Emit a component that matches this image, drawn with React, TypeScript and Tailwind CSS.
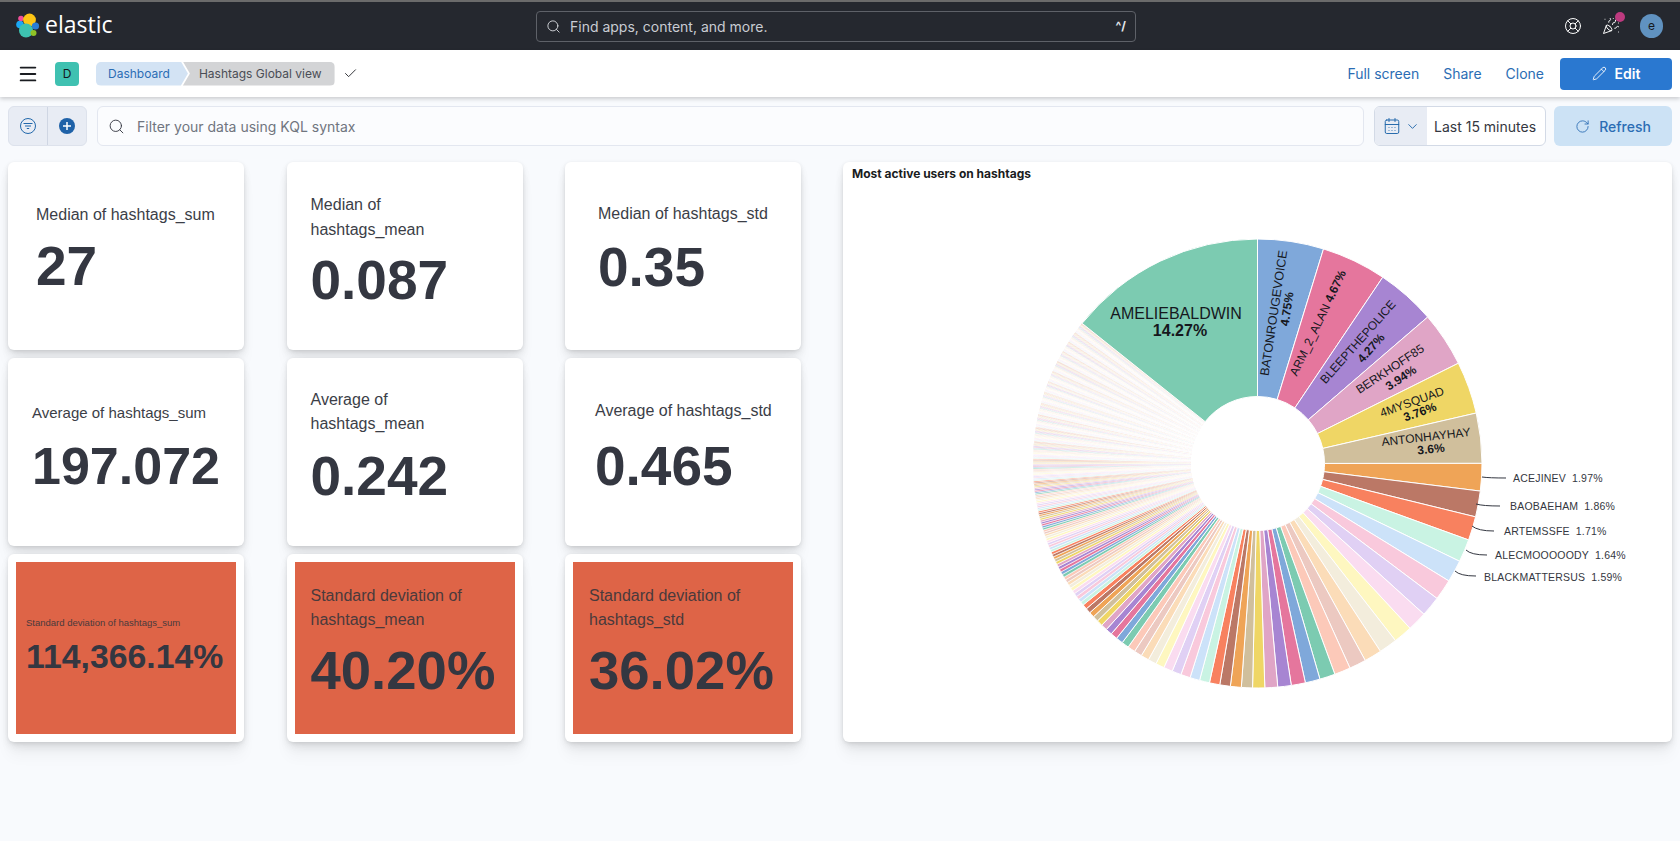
import { CalendarDays, Check, ChevronDown, LifeBuoy, Menu, PartyPopper, Pencil, RotateCw, Search } from "lucide-react";

const panelShadow =
  "shadow-[0_1px_4px_-1px_rgba(0,0,0,0.12),0_3px_8px_-1px_rgba(0,0,0,0.08),0_6px_12px_-1px_rgba(0,0,0,0.06),0_15px_15px_-1px_rgba(0,0,0,0.04)]";

const metrics = [
  { label: "Median of hashtags_sum", value: "27", pad: "pl-[28px]", labelSize: "text-[16px] leading-[1.6] pb-[4px]", valueSize: "text-[55px]", alert: false, shift: "-mt-[9px]" },
  { label: "Median of hashtags_mean", value: "0.087", pad: "pl-[24px] pr-[30px]", labelSize: "text-[16px] leading-[1.6] pb-[3px]", valueSize: "text-[55px]", alert: false, shift: "-mt-[6px]" },
  { label: "Median of hashtags_std", value: "0.35", pad: "pl-[33px]", labelSize: "text-[16px] leading-[1.6] pb-[6px]", valueSize: "text-[55px]", alert: false, shift: "-mt-[9px]" },
  { label: "Average of hashtags_sum", value: "197.072", pad: "pl-[24px]", labelSize: "text-[15px] leading-[1.6] pb-[9px]", valueSize: "text-[52px]", alert: false, shift: "-mt-[4px]" },
  { label: "Average of hashtags_mean", value: "0.242", pad: "pl-[24px] pr-[30px]", labelSize: "text-[16px] leading-[1.5] pb-[6px]", valueSize: "text-[55px]", alert: false, shift: "-mt-[5px]" },
  { label: "Average of hashtags_std", value: "0.465", pad: "pl-[30px]", labelSize: "text-[16px] leading-[1.6] pb-[8px]", valueSize: "text-[55px]", alert: false, shift: "-mt-[5px]" },
  { label: "Standard deviation of hashtags_sum", value: "114,366.14%", pad: "pl-[10px]", labelSize: "text-[9.5px] leading-[1.6] pb-[5px]", valueSize: "text-[33.8px]", alert: true, shift: "-mt-[4px]" },
  { label: "Standard deviation of hashtags_mean", value: "40.20%", pad: "pl-[16px] pr-[10px]", labelSize: "text-[16px] leading-[1.5] pb-[5px]", valueSize: "text-[54.5px]", alert: true, shift: "-mt-[6px]" },
  { label: "Standard deviation of hashtags_std", value: "36.02%", pad: "pl-[16px] pr-[10px]", labelSize: "text-[16px] leading-[1.5] pb-[5px]", valueSize: "text-[54.5px]", alert: true, shift: "-mt-[6px]" },
];

const palette = [
  "#7ccbb1", "#7fa8da", "#e5769d", "#a785d2", "#e0a5c6", "#efd665", "#d0bf9c", "#efa457", "#bb7866", "#f8815f",
  "#c9f3e3", "#cce2f9", "#f9c9dc", "#e0d0f4", "#fadcf0", "#fef7c0", "#f3eddc", "#fbdcb8", "#ecc9c1", "#fcc9b9",
];

// slice sizes in percent, clockwise from twelve o'clock
const head = [4.75, 4.67, 4.27, 3.94, 3.76, 3.6, 1.97, 1.86, 1.71, 1.64, 1.59];

function buildSlices() {
  const sizes = [...head];
  for (let i = 0; i < 14; i++) sizes.push(1.5 - (0.63 * i) / 13);
  for (let i = 0; i < 24; i++) sizes.push(0.8 - (0.45 * i) / 23);
  const used = sizes.reduce((a, b) => a + b, 0);
  const n = 320;
  const tail: number[] = [];
  for (let i = 0; i < n; i++) tail.push(0.05 + 0.28 * Math.pow(1 - i / n, 7));
  const tailSum = tail.reduce((a, b) => a + b, 0);
  const scale = (85.73 - used) / tailSum;
  tail.forEach((t) => sizes.push(t * scale));
  sizes.push(14.27);
  let start = 0;
  return sizes.map((size, i) => {
    const from = start;
    start += size;
    const color = i === sizes.length - 1 ? palette[0] : palette[(i + 1) % 20];
    return { from, to: start, color, thin: size < 0.3 };
  });
}

const cx = 414.5;
const cy = 273.5;
const outer = 224.5;
const inner = 67;

function point(pct: number, r: number) {
  const a = (pct / 100) * Math.PI * 2;
  return `${(cx + r * Math.sin(a)).toFixed(2)} ${(cy - r * Math.cos(a)).toFixed(2)}`;
}

function slicePath(from: number, to: number) {
  const large = to - from > 50 ? 1 : 0;
  return `M${point(from, inner)}L${point(from, outer)}A${outer} ${outer} 0 ${large} 1 ${point(to, outer)}L${point(to, inner)}A${inner} ${inner} 0 ${large} 0 ${point(from, inner)}Z`;
}

const slices = buildSlices();

// page coordinates minus the chart's svg origin (843, 190)
const radial = [
  { text: "BATONROUGEVOICE", x: 431, y: 123, size: 12.5, angle: -81.5, bold: false },
  { text: "4.75%", x: 444, y: 119, size: 12, angle: -81.5, bold: true },
  { text: "BLEEPTHEPOLICE", x: 515, y: 152, size: 12, angle: -48.4, bold: false },
  { text: "4.27%", x: 528, y: 158, size: 12, angle: -48.4, bold: true },
  { text: "BERKHOFF85", x: 547, y: 179, size: 12, angle: -33.6, bold: false },
  { text: "3.94%", x: 558, y: 188, size: 12, angle: -33.6, bold: true },
  { text: "4MYSQUAD", x: 569, y: 212, size: 12, angle: -19.8, bold: false },
  { text: "3.76%", x: 577, y: 222, size: 12, angle: -19.8, bold: true },
  { text: "ANTONHAYHAY", x: 583, y: 247, size: 12, angle: -6.5, bold: false },
  { text: "3.6%", x: 588, y: 259, size: 12, angle: -6.5, bold: true },
];

const outside = [
  { name: "ACEJINEV", pct: "1.97%", x: 670, y: 292, line: "M639 287Q646 288 663 288" },
  { name: "BAOBAEHAM", pct: "1.86%", x: 667, y: 320, line: "M633 314Q640 316 657 316" },
  { name: "ARTEMSSFE", pct: "1.71%", x: 661, y: 345, line: "M629 336Q635 341 651 341" },
  { name: "ALECMOOOOODY", pct: "1.64%", x: 652, y: 369, line: "M623 360Q628 365 644 365" },
  { name: "BLACKMATTERSUS", pct: "1.59%", x: 641, y: 391, line: "M612 381Q617 386 633 386" },
];

function PieChart() {
  return (
    <svg width="829" height="552" viewBox="0 0 829 552" className="block">
      <g>
        {slices.map((s, i) => (
          <path key={i} d={slicePath(s.from, s.to)} fill={s.color} stroke="#ffffff" strokeWidth={s.thin ? 0.6 : 1} />
        ))}
      </g>
      <g fontFamily="'Liberation Sans', Arial, sans-serif" fill="#16181d">
        <text x={333} y={129} fontSize={16} textAnchor="middle">AMELIEBALDWIN</text>
        <text x={337} y={146} fontSize={16} fontWeight={700} textAnchor="middle">14.27%</text>
        <text x={475} y={137} fontSize={12} textAnchor="middle" transform="rotate(-64.5 475 133)">
          ARM_2_ALAN <tspan fontWeight={700}>4.67%</tspan>
        </text>
        {radial.map((r) => (
          <text
            key={r.text}
            x={r.x}
            y={r.y + 4}
            fontSize={r.size}
            fontWeight={r.bold ? 700 : 400}
            textAnchor="middle"
            transform={`rotate(${r.angle} ${r.x} ${r.y})`}
          >
            {r.text}
          </text>
        ))}
      </g>
      <g fontFamily="'Liberation Sans', Arial, sans-serif" fontSize={10.5} letterSpacing={0.2} fill="#343741">
        {outside.map((o) => (
          <g key={o.name}>
            <path d={o.line} fill="none" stroke="#343741" strokeWidth={1} />
            <text x={o.x} y={o.y}>
              {o.name}
              <tspan dx={6}>{o.pct}</tspan>
            </text>
          </g>
        ))}
      </g>
    </svg>
  );
}

function ElasticLogo() {
  return (
    <svg width="24" height="26" viewBox="0 0 24 26">
      <circle cx="4" cy="11.5" r="3.8" fill="#1ba9f5" />
      <circle cx="5" cy="5.5" r="2.8" fill="#f04e98" />
      <circle cx="13.5" cy="7" r="6.4" fill="#fec514" />
      <circle cx="19.5" cy="13" r="3.6" fill="#2b7cd6" />
      <circle cx="10" cy="17.5" r="7" fill="#3dc2b0" />
      <circle cx="17.5" cy="20" r="3" fill="#90c226" />
    </svg>
  );
}

function MetricCard({ m }: { m: (typeof metrics)[number] }) {
  return (
    <div className={`h-[188px] rounded-[6px] bg-white font-['Liberation_Sans',Arial,sans-serif] ${panelShadow} ${m.alert ? "p-[8px]" : ""}`}>
      <div className={`h-full flex items-center ${m.alert ? "bg-[#de6447]" : ""}`}>
        <div className={`w-full ${m.shift} ${m.pad}`}>
          <div className={`${m.labelSize} ${m.alert ? "text-[#4a3a3c]" : "text-[#3b3e47]"}`}>{m.label}</div>
          <div className={`${m.valueSize} font-bold leading-[1.25] text-[#343741] whitespace-nowrap`}>{m.value}</div>
        </div>
      </div>
    </div>
  );
}

export default function App() {
  return (
    <div className="h-[841px] w-[1680px] overflow-hidden bg-[#f8fafd] font-['Inter',sans-serif]">
      <div className="h-[2px] bg-[#6b6b6b]" />
      <header className="h-[48px] bg-[#25282f] flex items-center pl-[16px] pr-[17px]">
        <div className="w-[520px] flex items-center gap-[5px] -mt-[1px]">
          <ElasticLogo />
          <span className="text-[23px] text-white font-['Open_Sans',sans-serif] leading-none -mt-[3px]">elastic</span>
        </div>
        <div className="w-[600px] h-[31px] rounded-[4px] border border-[#5e6168] bg-[#25282f] flex items-center px-[9px] gap-[9px]">
          <Search size={15} strokeWidth={1.4} className="text-[#dfe1e6]" />
          <span className="flex-1 text-[14px] text-[#c9ccd3]">Find apps, content, and more.</span>
          <span className="text-[12px] font-bold text-[#e4e6ea]">^/</span>
        </div>
        <div className="ml-auto flex items-center gap-[20px]">
          <LifeBuoy size={18} strokeWidth={1.3} className="text-white" />
          <div className="relative">
            <PartyPopper size={18} strokeWidth={1.3} className="text-white" />
            <span className="absolute -top-[5px] -right-[5px] w-[10px] h-[10px] rounded-full bg-[#bd3a7f]" />
          </div>
          <span className="w-[23px] h-[24px] rounded-full bg-[#6092c0] flex items-center justify-center text-[12px] text-[#16181d]">e</span>
        </div>
      </header>

      <nav className="relative h-[47px] bg-white flex items-center justify-between pl-[17px] pr-[8px] shadow-[0_2px_4px_rgba(0,0,0,0.18)]">
        <div className="flex items-center">
          <Menu size={22} strokeWidth={2} className="text-[#1a1c21]" />
          <span className="ml-[16px] w-[24px] h-[24px] rounded-[4px] bg-[#3fc1b1] flex items-center justify-center text-[12px] text-[#16181d]">D</span>
          <div className="ml-[17px] flex items-center text-[12px] h-[24px]">
            <span className="h-full pl-[12px] pr-[18px] flex items-center bg-[#d3e3f4] text-[#2b6db4] rounded-l-[5px] [clip-path:polygon(0_0,calc(100%-7px)_0,100%_50%,calc(100%-7px)_100%,0_100%)]">Dashboard</span>
            <span className="h-full -ml-[5px] pl-[16px] pr-[13px] flex items-center bg-[#d3d4d6] text-[#4a4d55] rounded-r-[5px] [clip-path:polygon(0_0,100%_0,100%_100%,0_100%,7px_50%)]">Hashtags Global view</span>
          </div>
          <Check size={15} strokeWidth={1.4} className="ml-[8px] text-[#1a1c21]" />
        </div>
        <div className="flex items-center text-[14px] text-[#2b6db4]">
          <span>Full screen</span>
          <span className="ml-[24px]">Share</span>
          <span className="ml-[24px]">Clone</span>
          <button className="ml-[16px] w-[112px] h-[32px] rounded-[4px] bg-[#2a78d0] text-white font-semibold flex items-center justify-center gap-[8px]">
            <Pencil size={15} strokeWidth={1.4} />
            Edit
          </button>
        </div>
      </nav>

      <div className="h-[40px] mt-[9px] mx-[8px] flex items-stretch text-[14px]">
        <div className="w-[79px] flex rounded-[6px] border border-[#dde2ec] bg-[#e8ecf4]">
          <div className="flex-1 border-r border-[#cfd6e3] flex items-center justify-center">
            <svg width="16" height="16" viewBox="0 0 16 16" fill="none" stroke="#2268ab" strokeWidth="1">
              <circle cx="8" cy="8" r="7.5" />
              <path d="M3.5 5.5h9M5 8h6M6.8 10.5h2.4" />
            </svg>
          </div>
          <div className="flex-1 flex items-center justify-center">
            <svg width="16" height="16" viewBox="0 0 16 16">
              <circle cx="8" cy="8" r="8" fill="#1f62a8" />
              <path d="M8 4v8M4 8h8" stroke="#ffffff" strokeWidth="1.5" />
            </svg>
          </div>
        </div>
        <div className="ml-[10px] w-[1267px] flex items-center rounded-[6px] border border-[#e3e7f0] bg-[#fbfcfe] pl-[10px] gap-[12px]">
          <Search size={17} strokeWidth={1.3} className="text-[#343741]" />
          <span className="text-[#70757f]">Filter your data using KQL syntax</span>
        </div>
        <div className="ml-[10px] w-[172px] flex rounded-[6px] border border-[#d3dae6] overflow-hidden bg-white">
          <div className="w-[52px] bg-[#e8ecf4] flex items-center justify-center gap-[4px] text-[#2268ab]">
            <CalendarDays size={18} strokeWidth={1.3} />
            <ChevronDown size={15} strokeWidth={1.5} />
          </div>
          <span className="flex-1 flex items-center pl-[7px] text-[#343741] whitespace-nowrap">Last 15 minutes</span>
        </div>
        <div className="ml-[8px] w-[118px] rounded-[6px] bg-[#cce2f5] text-[#2b6db4] font-medium flex items-center justify-center gap-[9px]">
          <RotateCw size={15} strokeWidth={1.4} />
          Refresh
        </div>
      </div>

      <main className="mt-[16px] mx-[8px] flex gap-[41px]">
        <div className="w-[794px] grid grid-cols-[236px_236px_236px] gap-x-[42.5px] gap-y-[8px]">
          {metrics.map((m) => (
            <MetricCard key={m.label} m={m} />
          ))}
        </div>
        <section className={`w-[829px] h-[580px] rounded-[6px] bg-white ${panelShadow}`}>
          <h2 className="h-[28px] pl-[9px] pt-[3px] text-[12px] font-bold text-[#1a1c21]">Most active users on hashtags</h2>
          <PieChart />
        </section>
      </main>
    </div>
  );
}
